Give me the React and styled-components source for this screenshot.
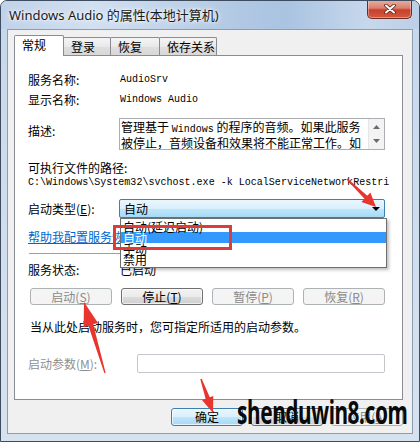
import React from "react";
import styled, { createGlobalStyle, css } from "styled-components";

const CJK = `"Noto Sans CJK SC", sans-serif`;
const MONO = `"Liberation Mono", monospace`;

const GlobalStyle = createGlobalStyle`
  html, body { margin: 0; padding: 0; background: #fff; }
  body { font-family: ${CJK}; font-size: 12px; color: #000; }
  * { box-sizing: border-box; }
`;

const arrowPoints = (x1, y1, x2, y2, head, headW, tailW, neckW) => {
  const dx = x2 - x1;
  const dy = y2 - y1;
  const len = Math.hypot(dx, dy);
  const ux = dx / len;
  const uy = dy / len;
  const px = -uy;
  const py = ux;
  const bx = x2 - ux * head;
  const by = y2 - uy * head;
  const pts = [
    [x1 + (px * tailW) / 2, y1 + (py * tailW) / 2],
    [bx + (px * neckW) / 2, by + (py * neckW) / 2],
    [bx + (px * headW) / 2, by + (py * headW) / 2],
    [x2, y2],
    [bx - (px * headW) / 2, by - (py * headW) / 2],
    [bx - (px * neckW) / 2, by - (py * neckW) / 2],
    [x1 - (px * tailW) / 2, y1 - (py * tailW) / 2],
  ];
  return pts.map((p) => p.map((v) => v.toFixed(1)).join(",")).join(" ");
};

const tabs = [
  { label: "常规", width: 50, active: true },
  { label: "登录", width: 48 },
  { label: "恢复", width: 50 },
  { label: "依存关系", width: 58 },
];

const startupTypes = ["自动(延迟启动)", "自动", "手动", "禁用"];

const App = () => {
  return (
    <>
      <GlobalStyle />
      <Window>
        <TitleBar>
          <Title>Windows Audio 的属性(本地计算机)</Title>
          <CloseButton>
            <svg width="12" height="10" viewBox="0 0 12 10">
              <path d="M2 1.5 L10 8.5 M10 1.5 L2 8.5" stroke="#5a2018" strokeWidth="3.6" strokeLinecap="round" />
              <path d="M2 1.5 L10 8.5 M10 1.5 L2 8.5" stroke="#fff" strokeWidth="2" strokeLinecap="round" />
            </svg>
          </CloseButton>
        </TitleBar>

        <Client>
          <TabStrip>
            {tabs.map((t) => (
              <Tab key={t.label} $active={t.active} $width={t.width}>
                {t.label}
              </Tab>
            ))}
          </TabStrip>

          <TabPanel>
            <Row $top={16}>
              <Label>服务名称:</Label>
              <Value>AudioSrv</Value>
            </Row>
            <Row $top={4}>
              <Label>显示名称:</Label>
              <Value>Windows Audio</Value>
            </Row>
            <Row $top={10} $height={32} $align="flex-start">
              <Label $pad={5}>描述:</Label>
              <DescBox>
                <DescText>
                  管理基于 <Latin>Windows</Latin> 的程序的音频。如果此服务
                  <br />
                  被停止，音频设备和效果将不能正常工作。如
                </DescText>
                <ScrollBar>
                  <svg width="7" height="4" viewBox="0 0 7 4">
                    <path d="M0 4 L3.5 0 L7 4 Z" fill="#6b6b6b" />
                  </svg>
                  <svg width="7" height="4" viewBox="0 0 7 4">
                    <path d="M0 0 L3.5 4 L7 0 Z" fill="#6b6b6b" />
                  </svg>
                </ScrollBar>
              </DescBox>
            </Row>
            <Row $top={10}>
              <Label $width={200}>可执行文件的路径:</Label>
            </Row>
            <Row $height={14}>
              <PathText>C:\Windows\System32\svchost.exe -k LocalServiceNetworkRestri</PathText>
            </Row>
            <Row $top={9} $height={19}>
              <Label>启动类型(<u>E</u>):</Label>
              <Select>
                <span>自动</span>
                <svg width="8" height="4" viewBox="0 0 8 4">
                  <path d="M0 0 L8 0 L4 4 Z" fill="#000" />
                </svg>
                <DropList>
                  {startupTypes.map((s, i) => (
                    <DropItem key={s} $selected={i === 1}>
                      {s}
                    </DropItem>
                  ))}
                </DropList>
              </Select>
            </Row>
            <Row $top={11}>
              <HelpLink>帮助我配置服务恢复选项。</HelpLink>
            </Row>
            <Separator />
            <Row $top={8}>
              <Label>服务状态:</Label>
              <StatusValue>已启动</StatusValue>
            </Row>
            <ActionRow>
              <Button $w={82} $h={17} disabled>
                启动(<u>S</u>)
              </Button>
              <Button $w={82} $h={17}>
                停止(<u>T</u>)
              </Button>
              <Button $w={82} $h={17} disabled>
                暂停(<u>P</u>)
              </Button>
              <Button $w={82} $h={17} disabled>
                恢复(<u>R</u>)
              </Button>
            </ActionRow>
            <Row $top={14} $indent={2}>
              当从此处启动服务时，您可指定所适用的启动参数。
            </Row>
            <Row $top={19} $height={19}>
              <Label $width={109} $muted>
                启动参数(<u>M</u>):
              </Label>
              <ParamInput />
            </Row>
          </TabPanel>

          <DialogButtons>
            <Button $w={72} $h={18} $default>
              确定
            </Button>
            <Button $w={72} $h={18}>
              取消
            </Button>
            <Button $w={72} $h={18} disabled>
              应用(<u>A</u>)
            </Button>
          </DialogButtons>
        </Client>

        <Annotations width="420" height="442" viewBox="0 0 420 442">
          <rect x="114.5" y="226.5" width="116" height="22" fill="none" stroke="#de3b3b" strokeWidth="3" />
          <polygon points={arrowPoints(347, 179, 376, 207, 14, 13, 1.5, 4)} fill="#e8352e" />
          <polygon points={arrowPoints(105, 373, 84, 302, 24, 15, 1.2, 5)} fill="#e8352e" />
          <polygon points={arrowPoints(201, 379, 213, 413, 16, 12, 1.5, 4.5)} fill="#e8352e" />
        </Annotations>

        <Watermark>shenduwin8.com</Watermark>
      </Window>
    </>
  );
};

const Window = styled.div`
  position: relative;
  width: 420px;
  height: 442px;
  border: 1px solid #3d4d5f;
  border-radius: 7px 7px 0 0;
  background: linear-gradient(180deg, #c6d7eb 0%, #cfdcec 40%, #d7e2ef 100%);
  overflow: hidden;
  display: flex;
  flex-direction: column;
`;

const TitleBar = styled.div`
  flex: none;
  height: 28px;
  display: flex;
  justify-content: space-between;
  align-items: flex-start;
  padding: 0 7px 0 8px;
  background: linear-gradient(
    90deg,
    #c0d2e9 0%,
    #d2e0f0 22%,
    #b5cbe5 52%,
    #a9c3e1 68%,
    #c7d8ec 88%,
    #bccfe7 100%
  );
`;

const Title = styled.div`
  margin-top: 5px;
  font-family: "Noto Sans", "Noto Sans CJK SC", sans-serif;
  font-size: 13px;
  line-height: 18px;
  color: #1a1a1a;
  text-shadow: 0 0 6px #fff, 0 0 3px #fff;
  white-space: nowrap;
`;

const CloseButton = styled.div`
  width: 45px;
  height: 19px;
  margin-top: -1px;
  display: flex;
  align-items: center;
  justify-content: center;
  border: 1px solid #6e2b22;
  border-top: none;
  border-radius: 0 0 5px 5px;
  background: linear-gradient(180deg, #eab0a2 0%, #dc7f6b 45%, #c8402c 55%, #d25a3f 100%);
  box-shadow: inset 0 0 0 1px rgba(255, 255, 255, 0.35);
`;

const Client = styled.div`
  flex: none;
  height: 405px;
  margin: 0 6px;
  border: 1px solid #8c9db2;
  background: #f0f0f0;
  padding: 0 8px 0 6px;
  display: flex;
  flex-direction: column;
  align-items: flex-start;
`;

const TabStrip = styled.div`
  height: 25px;
  display: flex;
  align-items: flex-end;
`;

const Tab = styled.div`
  width: ${(p) => p.$width}px;
  height: 18px;
  margin-left: -1px;
  padding-left: 7px;
  display: flex;
  align-items: center;
  border: 1px solid #898c95;
  border-bottom: none;
  border-radius: 2px 2px 0 0;
  background: linear-gradient(180deg, #f4f4f4 0%, #e9e9e9 50%, #dedede 51%, #d8d8d8 100%);
  font-size: 12px;
  line-height: 16px;
  &:first-child {
    margin-left: 0;
  }
  ${(p) =>
    p.$active &&
    css`
      position: relative;
      z-index: 2;
      height: 21px;
      margin-bottom: -1px;
      background: #fff;
      padding-bottom: 2px;
    `}
`;

const TabPanel = styled.div`
  width: 389px;
  height: 345px;
  border: 1px solid #898c95;
  background: #fff;
  padding: 0 17px 0 13px;
  display: flex;
  flex-direction: column;
`;

const Row = styled.div`
  flex: none;
  height: ${(p) => p.$height || 16}px;
  margin-top: ${(p) => p.$top || 0}px;
  padding-left: ${(p) => p.$indent || 0}px;
  display: flex;
  align-items: ${(p) => p.$align || "center"};
  font-size: 12px;
  line-height: 16px;
  white-space: nowrap;
`;

const Label = styled.div`
  flex: none;
  width: ${(p) => p.$width || 91}px;
  padding-top: ${(p) => p.$pad || 0}px;
  color: ${(p) => (p.$muted ? "#8f8f8f" : "#000")};
  font-size: 12px;
  line-height: 16px;
`;

const Value = styled.div`
  padding-left: 1px;
  font-family: ${MONO};
  font-size: 10px;
  line-height: 16px;
`;

const Latin = styled.span`
  font-family: ${MONO};
  font-size: 10px;
`;

const PathText = styled.div`
  font-family: ${MONO};
  font-size: 10px;
  line-height: 14px;
  letter-spacing: 0.02px;
`;

const DescBox = styled.div`
  width: 266px;
  height: 32px;
  display: flex;
  border: 1px solid #abadb3;
  background: #fff;
`;

const DescText = styled.div`
  flex: 1;
  padding: 1px 0 0 1px;
  font-size: 12px;
  line-height: 13px;
  overflow: hidden;
`;

const ScrollBar = styled.div`
  width: 16px;
  display: flex;
  flex-direction: column;
  align-items: center;
  justify-content: space-between;
  padding: 6px 0 6px;
  background: #f3f3f3;
  border-left: 1px solid #e6e6e6;
`;

const Select = styled.div`
  position: relative;
  width: 266px;
  height: 19px;
  display: flex;
  align-items: center;
  justify-content: space-between;
  padding: 0 4px 0 4px;
  border: 1px solid #3c7fb1;
  border-radius: 2px;
  background: linear-gradient(180deg, #eaf6fd 0%, #d9f0fc 50%, #bee6fd 51%, #a7d9f5 100%);
  font-size: 12px;
`;

const DropList = styled.div`
  position: absolute;
  z-index: 5;
  top: 18px;
  left: 0;
  width: 267px;
  height: 50px;
  padding-top: 2px;
  border: 1px solid #6f6f6f;
  background: #fff;
  box-shadow: 2px 2px 3px rgba(0, 0, 0, 0.25);
`;

const DropItem = styled.div`
  height: 11px;
  padding-left: 2px;
  font-size: 12px;
  line-height: 11px;
  color: ${(p) => (p.$selected ? "#fff" : "#000")};
  background: ${(p) => (p.$selected ? "#3399ff" : "transparent")};
`;

const HelpLink = styled.span`
  color: #0066cc;
  text-decoration: underline;
  font-size: 12px;
`;

const Separator = styled.div`
  flex: none;
  height: 1px;
  margin-top: 8px;
  margin-left: 1px;
  width: 357px;
  background: #a0a0a0;
`;

const StatusValue = styled.div`
  padding-left: 1px;
`;

const ActionRow = styled.div`
  flex: none;
  margin-top: 10px;
  padding-left: 2px;
  display: flex;
  justify-content: space-between;
`;

const Button = styled.button`
  width: ${(p) => p.$w}px;
  height: ${(p) => p.$h}px;
  padding: 0;
  display: flex;
  align-items: center;
  justify-content: center;
  font-family: ${CJK};
  font-size: 12px;
  line-height: 14px;
  color: #000;
  border: 1px solid #707070;
  border-radius: 3px;
  background: linear-gradient(180deg, #f2f2f2 0%, #ebebeb 50%, #dddddd 51%, #cfcfcf 100%);
  box-shadow: inset 0 0 0 1px rgba(255, 255, 255, 0.6);
  u {
    text-decoration: underline;
  }
  &:disabled {
    color: #8a8a8a;
    border-color: #adb2b5;
    background: #f4f4f4;
    box-shadow: none;
  }
  ${(p) =>
    p.$default &&
    css`
      border-color: #3c7fb1;
      background: linear-gradient(180deg, #eaf6fd 0%, #d9f0fc 50%, #bee6fd 51%, #a7d9f5 100%);
      box-shadow: inset 0 0 0 1px rgba(255, 255, 255, 0.7);
    `}
`;

const ParamInput = styled.div`
  width: 248px;
  height: 19px;
  border: 1px solid #c3c6cb;
  border-radius: 2px;
  background: #fff;
`;

const DialogButtons = styled.div`
  width: 389px;
  margin-top: 8px;
  display: flex;
  justify-content: flex-end;
  gap: 8px;
`;

const Annotations = styled.svg`
  position: absolute;
  left: -1px;
  top: -1px;
  z-index: 10;
  pointer-events: none;
`;

const Watermark = styled.div`
  position: absolute;
  z-index: 11;
  left: 236px;
  top: 393px;
  font-family: "Noto Sans", sans-serif;
  font-weight: 700;
  font-size: 32px;
  line-height: 36px;
  letter-spacing: -0.6px;
  color: #0a0a0a;
  transform: scaleX(0.65);
  transform-origin: left center;
  white-space: nowrap;
`;

export default App;
